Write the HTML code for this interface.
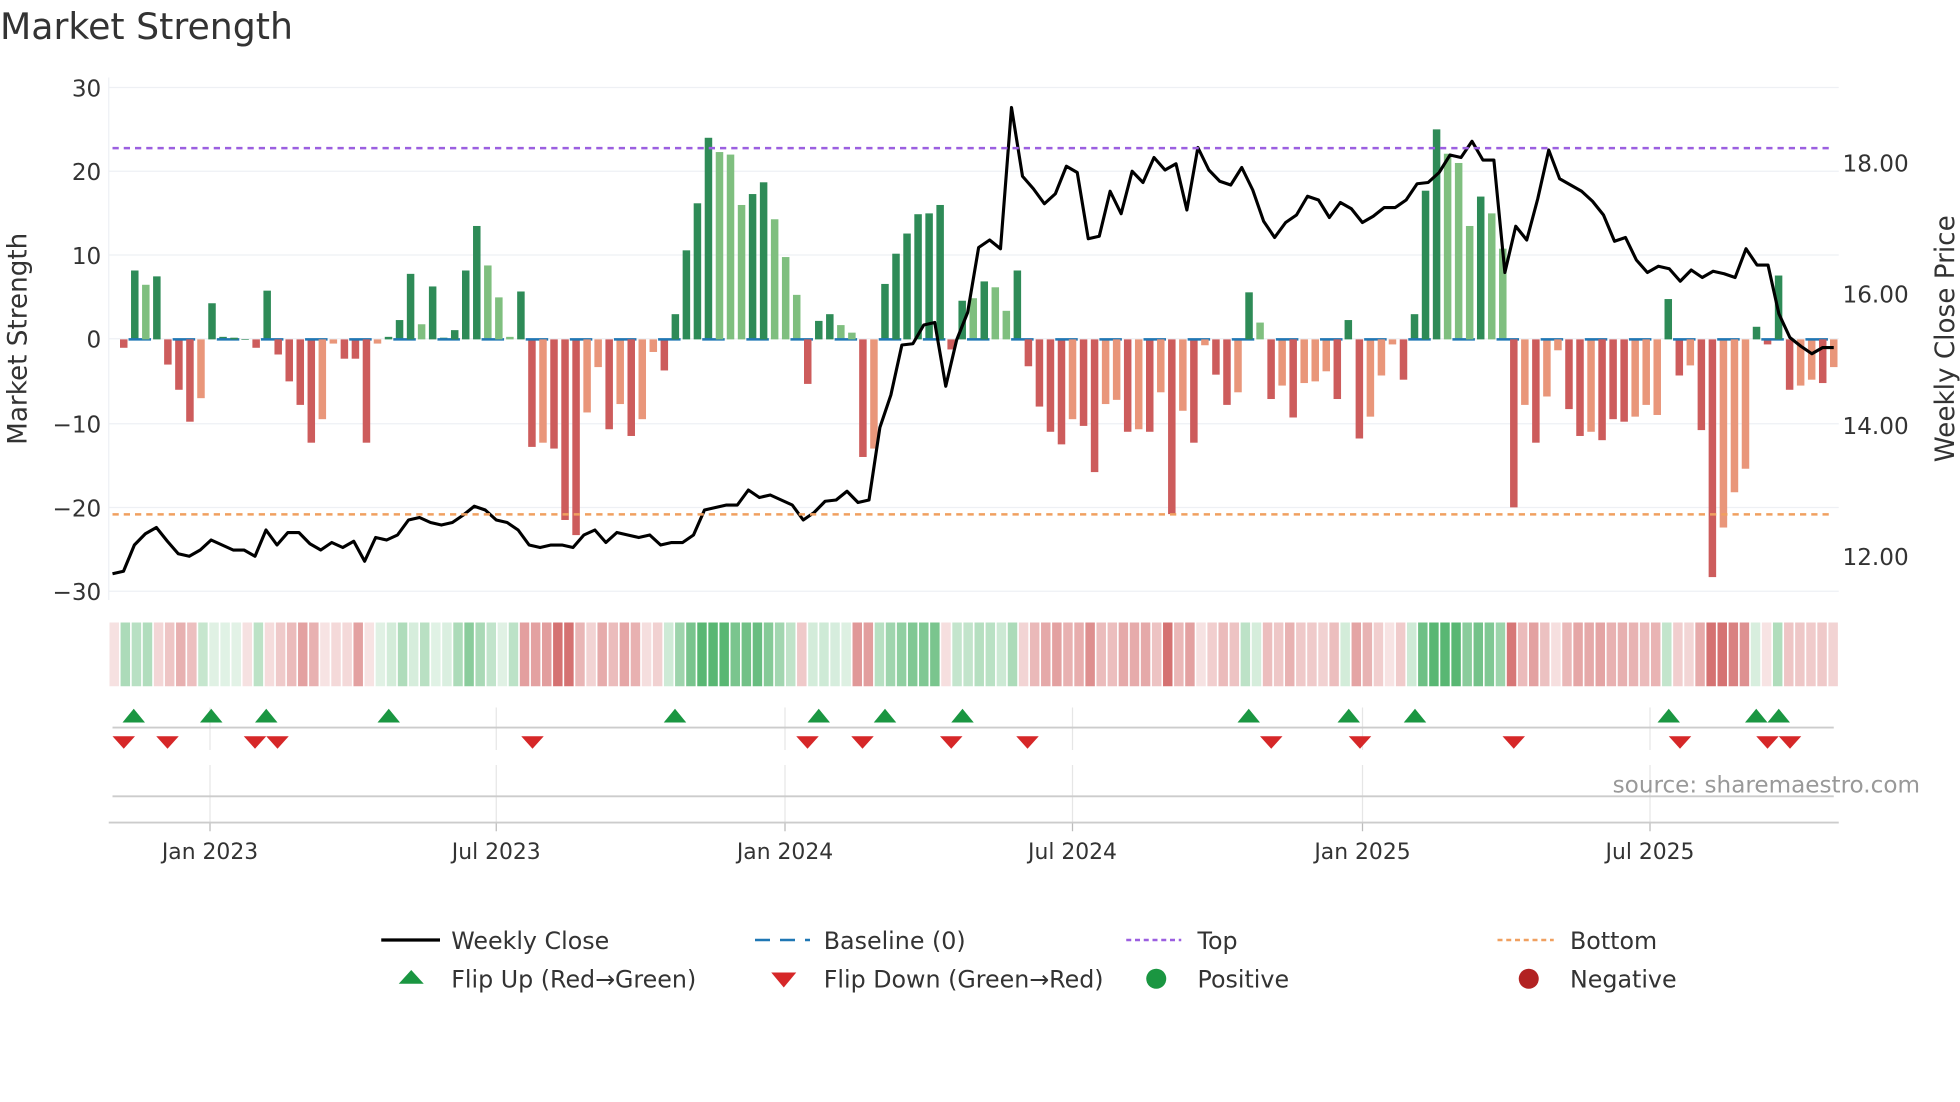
<!DOCTYPE html>
<html><head><meta charset="utf-8"><style>
html,body{margin:0;padding:0;background:#fff;width:1960px;height:1102px;overflow:hidden}
svg{display:block}
text{font-family:"DejaVu Sans","Liberation Sans",sans-serif;fill:#2a3f5f}
</style></head><body>
<svg id="s" width="1960" height="1102" viewBox="0 0 1568 881.6" xmlns="http://www.w3.org/2000/svg">
<text x="0" y="31" font-size="29" style="fill:#333">Market Strength</text>
<g id="grid"></g>
<g id="bars"></g>
<g id="heat"></g>
<g id="marks"></g>
<polyline id="price" fill="none" stroke="#000" stroke-width="2.5" stroke-linejoin="round"/>
<line x1="90" x2="1467" y1="118.5" y2="118.5" stroke="#9b5fe0" stroke-width="2" stroke-dasharray="5,4"/>
<line x1="90" x2="1467" y1="411.5" y2="411.5" stroke="#f0a060" stroke-width="2" stroke-dasharray="5,4"/>
<g font-size="18.5" text-anchor="end" style="fill:#333">
<text x="81" y="77" style="fill:#333">30</text><text x="81" y="144" style="fill:#333">20</text><text x="81" y="211" style="fill:#333">10</text><text x="81" y="278" style="fill:#333">0</text><text x="81" y="346" style="fill:#333">−10</text><text x="81" y="413" style="fill:#333">−20</text><text x="81" y="480" style="fill:#333">−30</text>
</g>
<g font-size="18.5" style="fill:#333">
<text x="1474" y="137" style="fill:#333">18.00</text><text x="1474" y="242" style="fill:#333">16.00</text><text x="1474" y="347" style="fill:#333">14.00</text><text x="1474" y="452" style="fill:#333">12.00</text>
</g>
<text transform="translate(21,271) rotate(-90)" font-size="21" text-anchor="middle" style="fill:#333">Market Strength</text>
<text transform="translate(1563,271) rotate(-90)" font-size="21" text-anchor="middle" style="fill:#333">Weekly Close Price</text>
<text x="1536" y="634" font-size="18.5" text-anchor="end" style="fill:#999">source: sharemaestro.com</text>
<g font-size="17.5" text-anchor="middle" style="fill:#333">
<text x="168" y="687" style="fill:#333">Jan 2023</text><text x="397" y="687" style="fill:#333">Jul 2023</text><text x="628" y="687" style="fill:#333">Jan 2024</text><text x="858" y="687" style="fill:#333">Jul 2024</text><text x="1090" y="687" style="fill:#333">Jan 2025</text><text x="1320" y="687" style="fill:#333">Jul 2025</text>
</g>
<g font-size="19" style="fill:#333">
<line x1="305" x2="352" y1="752" y2="752" stroke="#000" stroke-width="2.6"/>
<text x="361" y="759" style="fill:#333">Weekly Close</text>
<line x1="604" x2="648" y1="752" y2="752" stroke="#1f77b4" stroke-width="2" stroke-dasharray="12,8"/>
<text x="659" y="759" style="fill:#333">Baseline (0)</text>
<line x1="901" x2="945" y1="752" y2="752" stroke="#9b5fe0" stroke-width="2" stroke-dasharray="4,3"/>
<text x="958" y="759" style="fill:#333">Top</text>
<line x1="1198" x2="1243" y1="752" y2="752" stroke="#f0a060" stroke-width="2" stroke-dasharray="4,3"/>
<text x="1256" y="759" style="fill:#333">Bottom</text>
<path d="M319,787 L329,776 L339,787Z" fill="#1a9641"/>
<text x="361" y="790" style="fill:#333">Flip Up (Red→Green)</text>
<path d="M617,778 L637,778 L627,790Z" fill="#d62728"/>
<text x="659" y="790" style="fill:#333">Flip Down (Green→Red)</text>
<circle cx="925" cy="783" r="8" fill="#1a9641"/>
<text x="958" y="790" style="fill:#333">Positive</text>
<circle cx="1223" cy="783" r="8" fill="#b22222"/>
<text x="1256" y="790" style="fill:#333">Negative</text>
</g>
</svg>
<script>
var NS="http://www.w3.org/2000/svg";
function el(p,t,a){var e=document.createElementNS(NS,t);for(var k in a)e.setAttribute(k,a[k]);p.appendChild(e);return e;}
var g=document.getElementById('grid');
[70,137,204,271,339,406,473].forEach(function(y){el(g,'line',{x1:87,x2:1471,y1:y,y2:y,stroke:'#eef0f4','stroke-width':1});});
el(g,'line',{x1:87,x2:87,y1:62,y2:480,stroke:'#eef0f4'});
[168,397,628,858,1090,1320].forEach(function(x){el(g,'line',{x1:x,x2:x,y1:566,y2:600,stroke:'#e6e6e6'});el(g,'line',{x1:x,x2:x,y1:612,y2:658,stroke:'#e6e6e6'});el(g,'line',{x1:x,x2:x,y1:658,y2:665,stroke:'#bbb'});});
el(g,'line',{x1:90,x2:1467,y1:582,y2:582,stroke:'#ccc','stroke-width':1.5});
el(g,'line',{x1:90,x2:1467,y1:637,y2:637,stroke:'#ccc','stroke-width':1.5});
el(g,'line',{x1:87,x2:1471,y1:658,y2:658,stroke:'#ccc','stroke-width':1.5});
var d="-1R 8.2G 6.5L 7.5G -3R -6R -9.8R -7S 4.3G 0.3G 0.2G 0G -1R 5.8G -1.8R -5R -7.8R -12.3R -9.5S -0.5S -2.3R -2.3R -12.3R -0.5S 0.3G 2.3G 7.8G 1.8L 6.3G 0.2G 1.1G 8.2G 13.5G 8.8L 5L 0.3L 5.7G -12.8R -12.3S -13R -21.5R -23.3R -8.7S -3.3S -10.7R -7.7S -11.5R -9.5S -1.5S -3.7R 3G 10.6G 16.2G 24G 22.3L 22L 16L 17.3G 18.7G 14.3L 9.8L 5.3L -5.3R 2.2G 3G 1.7L 0.8L -14R -13S 6.6G 10.2G 12.6G 14.9G 15G 16G -1.2R 4.6G 4.9L 6.9G 6.2L 3.4L 8.2G -3.2R -8R -11R -12.5R -9.5S -10.3R -15.8R -7.7S -7.2S -11R -10.7S -11R -6.3S -20.8R -8.5S -12.3R -0.7S -4.2R -7.8R -6.3S 5.6G 2L -7.1R -5.5S -9.3R -5.2S -5S -3.8S -7.1R 2.3G -11.8R -9.2S -4.3S -0.6S -4.8R 3G 17.7G 25G 22.1L 21L 13.5L 17G 15L 10.8L -20R -7.8S -12.3R -6.8S -1.3S -8.3R -11.5R -11S -12R -9.5R -9.8R -9.2S -7.8S -9S 4.8G -4.3R -3.1S -10.8R -28.3R -22.4S -18.2S -15.4S 1.5G -0.6R 7.6G -6R -5.5S -4.8S -5.2R -3.3S".split(' ');
var col={G:'#2e8b57',L:'#7fbf7f',R:'#cd5c5c',S:'#e9967a'};
var b=document.getElementById('bars'),h=document.getElementById('heat');
var n=d.length,x0=99,x1=1467,dx=(x1-x0)/(n-1),sc=6.72;
var hw=(1471-87)/n;
for(var i=0;i<n;i++){
 var v=parseFloat(d[i]),t=d[i].slice(-1),x=x0+i*dx;
 var y=v>=0?271.5-v*sc:271.5,hh=Math.max(Math.abs(v)*sc,0.5);
 el(b,'rect',{x:x-3,y:y,width:6,height:hh,fill:col[t]});
 if(i%4==1) el(b,'line',{x1:x-5,x2:x+13,y1:271.5,y2:271.5,stroke:'#1f77b4','stroke-width':2});
 var a=Math.min(0.15+Math.abs(v)/30,0.85);
 var c=v>=0?'rgba(60,170,90,'+a+')':'rgba(200,70,70,'+(a*0.9)+')';
 el(h,'rect',{x:87+i*hw+0.6,y:498,width:hw-1.3,height:51,fill:c});
}
var ys=[459,457,436,427,422,433,443,445,440,432,436,440,440,445,424,436,426,426,435,440,434,438,433,449,430,432,428,416,414,418,420,418,412,405,408,416,418,424,436,438,436,436,438,428,424,434,426,428,430,428,436,434,434,428,408,406,404,404,392,398,396,400,404,416,410,401,400,393,402,400,342,316,276,275,260,258,309,272,250,198,192,199,86,141,151,163,155,133,138,191,189,153,171,137,146,126,136,131,168,118,136,145,148,134,152,177,190,178,172,157,160,174,162,167,178,173,166,166,160,147,146,138,124,126,113,128,128,218,181,192,159,120,143,148,153,161,172,193,190,208,218,213,215,225,216,222,217,219,222,199,212,212,251,270,277,283,278,278];
var pts=[];var m=ys.length;for(var j=0;j<m;j++){pts.push((90+j*(1467-90)/(m-1)).toFixed(1)+','+ys[j]);}
document.getElementById('price').setAttribute('points',pts.join(' '));
var mk=document.getElementById('marks');
[107,169,213,311,540,655,708,770,999,1079,1132,1335,1405,1423].forEach(function(x){el(mk,'path',{d:'M'+(x-9)+',578 L'+x+',567 L'+(x+9)+',578Z',fill:'#1a9641'});});
[99,134,204,222,426,646,690,761,822,1017,1088,1211,1344,1414,1432].forEach(function(x){el(mk,'path',{d:'M'+(x-9)+',589 L'+(x+9)+',589 L'+x+',599Z',fill:'#d62728'});});
</script>
</body></html>
